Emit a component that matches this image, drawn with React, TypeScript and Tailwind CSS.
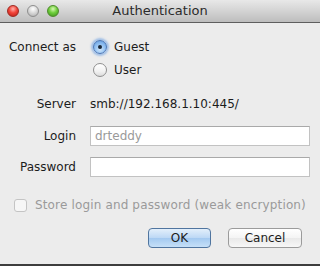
import React from "react";

const font = { fontFamily: '"Lucida Grande", "DejaVu Sans", sans-serif' };

function Light({ color }: { color: "red" | "gray" | "green" }) {
  const cls =
    color === "red"
      ? "bg-[radial-gradient(circle_at_50%_30%,#ffb3ad_0%,#f2453a_45%,#b81d14_100%)] border-[#9e2a22]"
      : color === "green"
      ? "bg-[radial-gradient(circle_at_50%_30%,#d9f7b5_0%,#6fcf3c_45%,#3c8f1b_100%)] border-[#4f8a2c]"
      : "bg-[radial-gradient(circle_at_50%_30%,#ffffff_0%,#d6d6d6_50%,#a9a9a9_100%)] border-[#8e8e8e]";
  return <div className={`w-3 h-3 rounded-full border ${cls}`} />;
}

function Radio({ checked }: { checked?: boolean }) {
  if (checked) {
    return (
      <div className="w-[14px] h-[14px] rounded-full border border-[#4a77b8] bg-[radial-gradient(circle_at_50%_70%,#cfe6fb_0%,#8dbdf0_55%,#5d95d8_100%)] shadow-[0_0_2px_2px_rgba(110,160,225,0.6)] flex items-center justify-center">
        <div className="w-[4px] h-[4px] rounded-full bg-[#1b2838]" />
      </div>
    );
  }
  return (
    <div className="w-[14px] h-[14px] rounded-full border border-[#8f8f8f] bg-[linear-gradient(#ffffff,#f1f1f1_60%,#dcdcdc)]" />
  );
}

function Row({ label, children, className = "" }: { label: string; children?: React.ReactNode; className?: string }) {
  return (
    <div className={`flex items-center pr-[10px] ${className}`}>
      <div className="w-[76px] text-right shrink-0">{label}</div>
      <div className="flex-1 ml-[14px]">{children}</div>
    </div>
  );
}

export default function App() {
  return (
    <div className="w-[320px] h-[266px] bg-[#ececec] text-[12px] text-[#1c1c1c] overflow-hidden flex flex-col" style={font}>
      {/* title bar */}
      <div className="relative h-[23px] shrink-0 border-b border-[#5e5e5e] bg-[linear-gradient(#e8e8e8,#d3d3d3_50%,#bdbdbd)] flex items-center">
        <div className="flex items-center gap-[8px] pl-[7px]">
          <Light color="red" />
          <Light color="gray" />
          <Light color="green" />
        </div>
        <div className="absolute inset-0 flex items-center justify-center text-[13px] text-[#2b2b2b]">
          Authentication
        </div>
      </div>

      {/* body */}
      <div className="flex-1 flex flex-col">
        <div className="flex items-center h-[18px] mt-[15px]">
          <div className="w-[76px] text-right shrink-0">Connect as</div>
          <div className="flex items-center gap-[7px] ml-[17px]">
            <Radio checked />
            <span>Guest</span>
          </div>
        </div>
        <div className="flex items-center h-[18px] mt-[5px]">
          <div className="flex items-center gap-[7px] ml-[93px]">
            <Radio />
            <span>User</span>
          </div>
        </div>

        <Row label="Server" className="h-[18px] mt-[16px]">
          smb://192.168.1.10:445/
        </Row>

        <Row label="Login" className="h-[20px] mt-[13px]">
          <div className="h-[20px] bg-white border border-[#c2c2c2] border-t-[#a9a9a9] flex items-center pl-[4px] text-[#9a9a9a]">
            drteddy
          </div>
        </Row>

        <Row label="Password" className="h-[20px] mt-[11px]">
          <div className="h-[20px] bg-white border border-[#c2c2c2] border-t-[#a9a9a9]" />
        </Row>

        <div className="flex items-center gap-[8px] pl-[14px] h-[14px] mt-[21px] text-[#9a9a9a] whitespace-nowrap tracking-[0.15px]">
          <div className="w-[13px] h-[13px] shrink-0 rounded-[3px] border border-[#c4c4c4] bg-[#f6f6f6]" />
          <span>Store login and password (weak encryption)</span>
        </div>

        <div className="flex justify-end gap-[17px] pr-[18px] mt-[16px]">
          <button className="w-[63px] h-[20px] rounded-[4px] border border-[#50759f] bg-[linear-gradient(#e3effb,#bcd8f5_50%,#a3c9f0_51%,#c6e0f8)] leading-none">
            OK
          </button>
          <button className="w-[74px] h-[20px] rounded-[4px] border border-[#9b9b9b] bg-[linear-gradient(#ffffff,#f4f4f4_50%,#e9e9e9_51%,#f7f7f7)] leading-none">
            Cancel
          </button>
        </div>
      </div>
      <div className="h-[2px] shrink-0 bg-[#3d3d3d]" />
    </div>
  );
}
